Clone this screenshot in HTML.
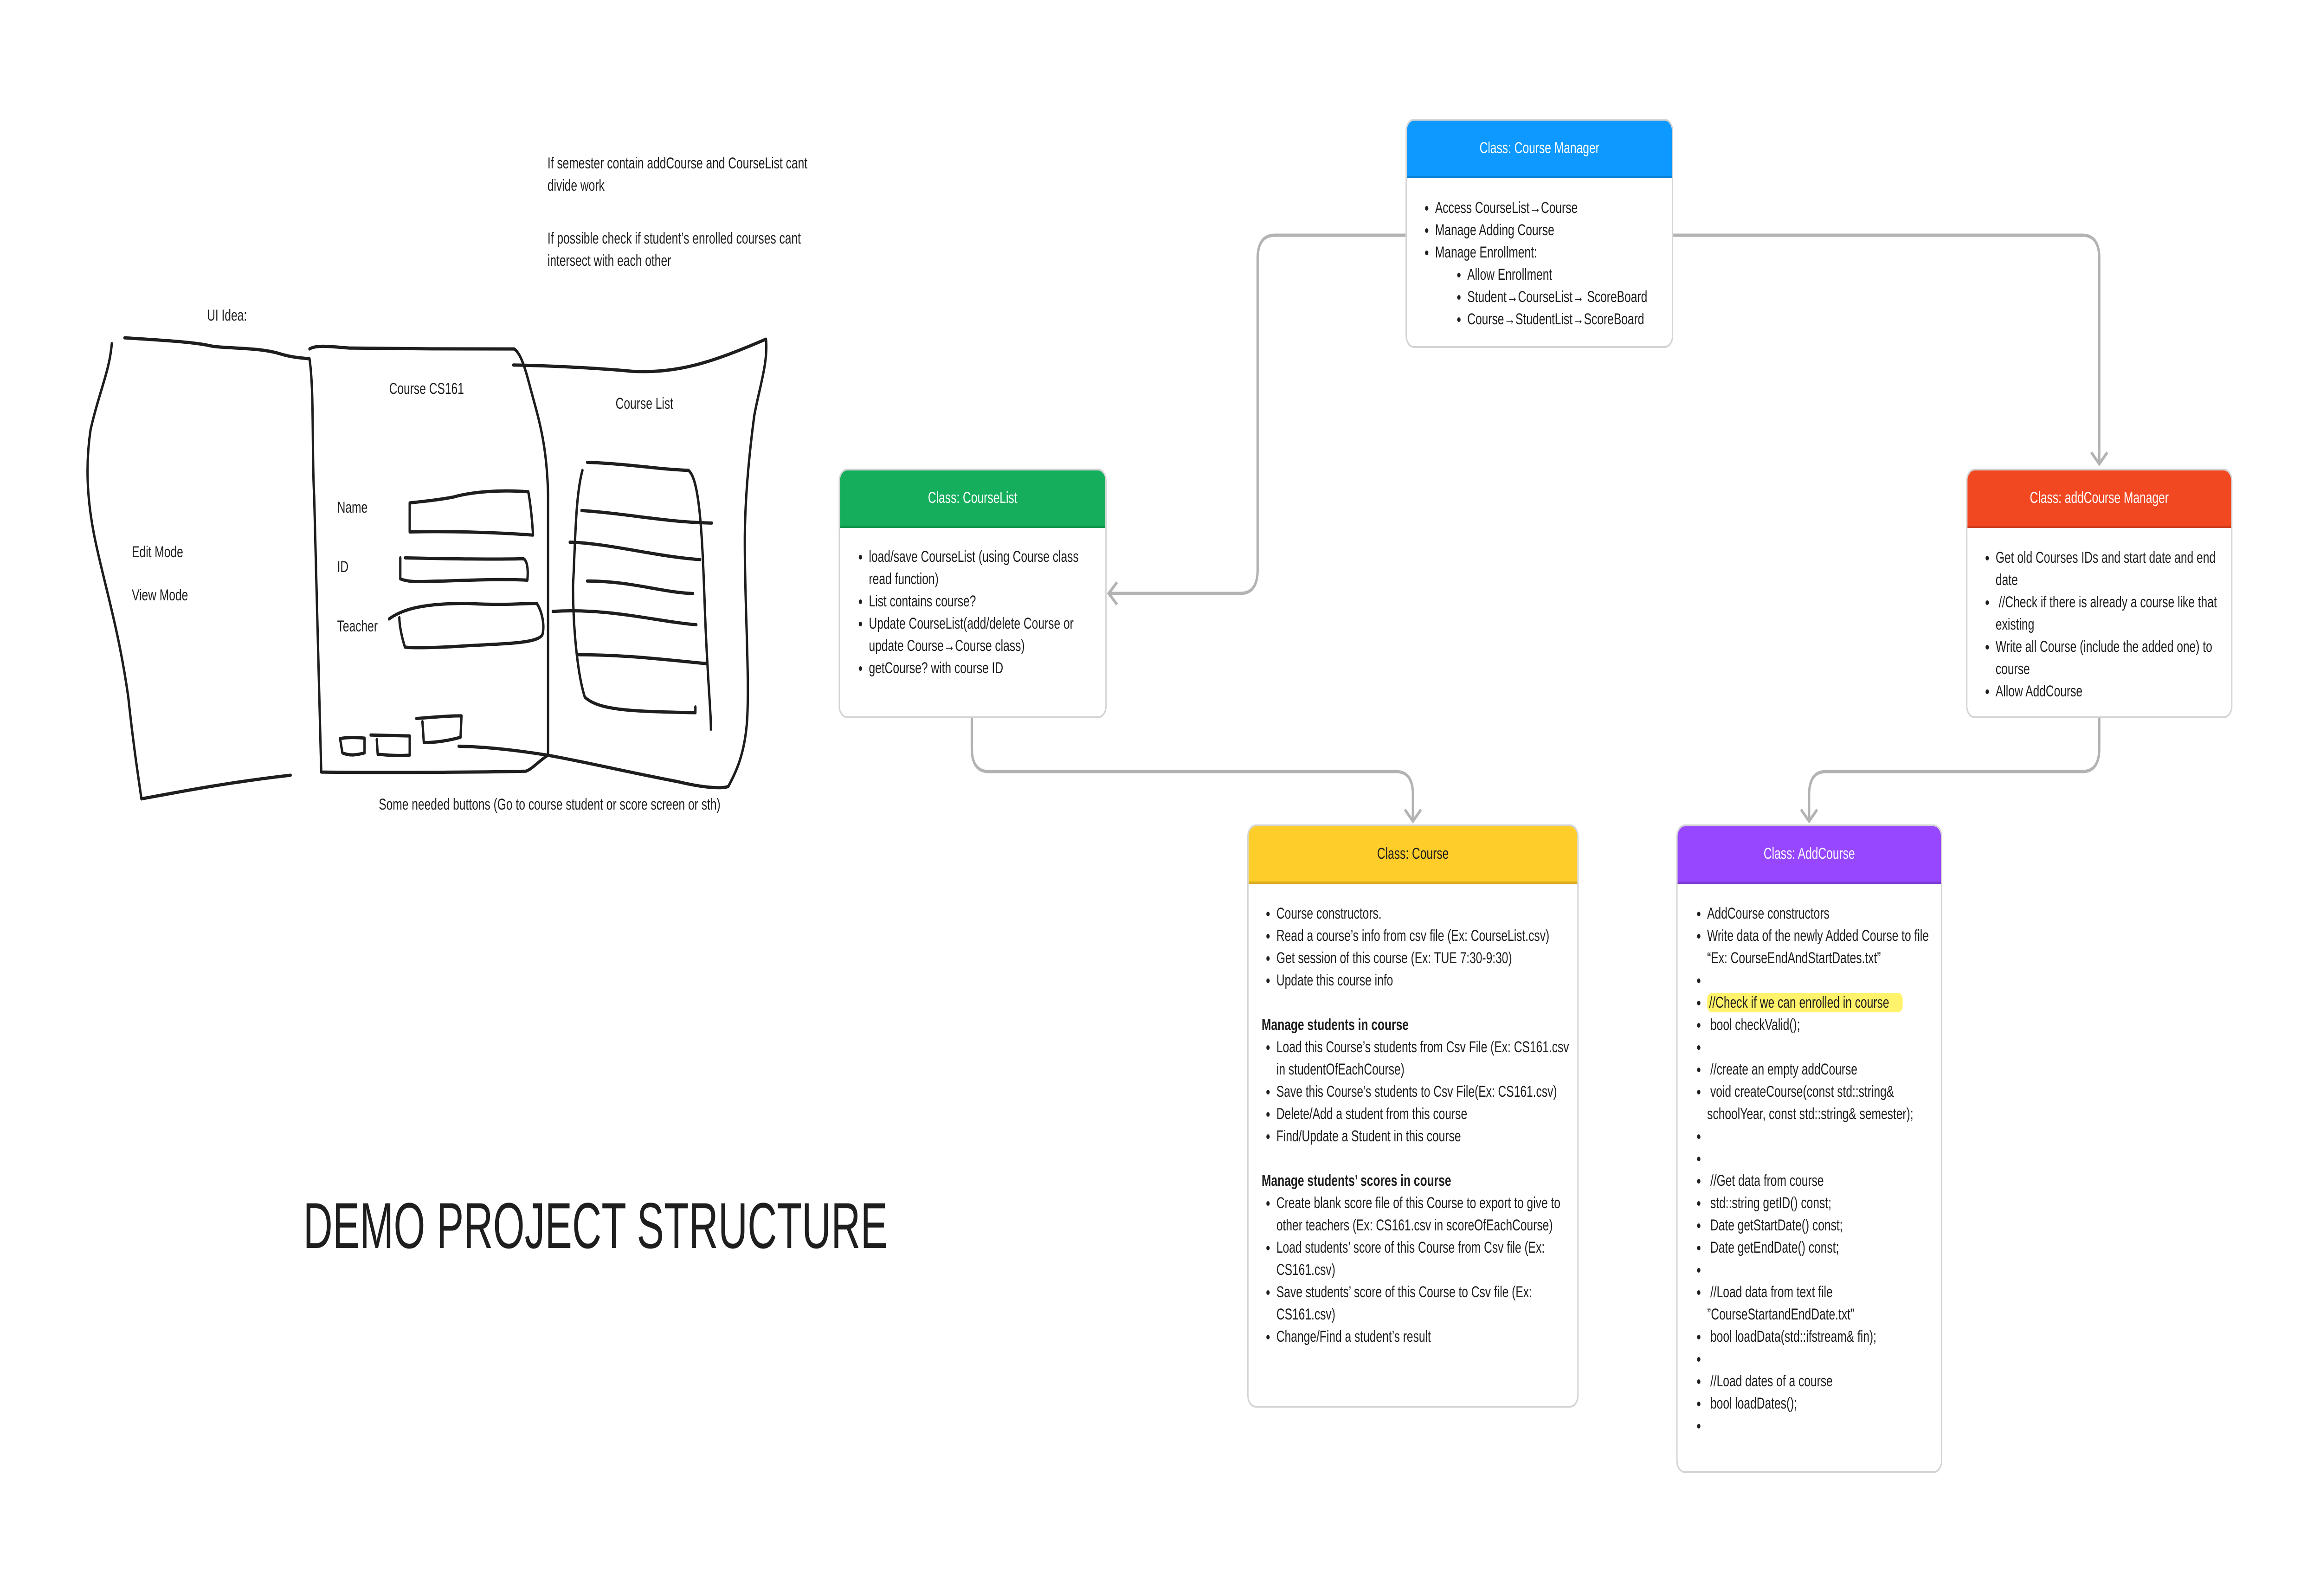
<!DOCTYPE html>
<html><head><meta charset="utf-8"><style>
html,body{margin:0;padding:0;background:#fff;width:100%;height:100%;overflow:hidden}
#root{display:block;width:100vw;height:100vh}
.pg{width:6916px;height:3440px;position:relative;overflow:hidden;font-family:"Liberation Sans",sans-serif;color:#1e1e1e;background:#fff}
.t{position:absolute;font-size:34px;line-height:48px;white-space:nowrap}
.box{position:absolute;background:#fff;border:4px solid #d4d4d4;border-radius:26px;box-sizing:border-box;overflow:hidden}
.hd{height:124px;display:flex;align-items:center;justify-content:center;color:#fff;font-size:34px;border-bottom:5px solid rgba(0,0,0,.15);box-sizing:border-box}
ul{margin:0;padding:0;list-style:none;font-size:34px;line-height:48px}
li{position:relative;white-space:nowrap}
li:before{content:"";position:absolute;width:10px;height:10px;border-radius:50%;background:#1e1e1e;left:-30px;top:20px}
.b{font-weight:bold;font-size:34px;line-height:48px;white-space:nowrap}
</style></head><body>
<svg id="root" viewBox="0 0 6916 3440" preserveAspectRatio="none">
<foreignObject x="0" y="0" width="6916" height="3440">
<div class="pg">

<svg width="6916" height="3440" style="position:absolute;left:0;top:0">
<g fill="none" stroke="#b3b3b3" stroke-width="7">
<path d="M4190,507 H3800 Q3749,507 3749,558 V1228 Q3749,1279 3698,1279 H3310"/>
<path d="M3330,1255 L3305,1279 L3330,1303"/>
<path d="M4988,507 H6208 Q6258,507 6258,557 V995"/>
<path d="M6234,975 L6258,1000 L6282,975"/>
<path d="M2897,1548 V1613 Q2897,1663 2947,1663 H4162 Q4212,1663 4212,1713 V1765"/>
<path d="M4188,1745 L4212,1770 L4236,1745"/>
<path d="M6258,1548 V1613 Q6258,1663 6208,1663 H5443 Q5393,1663 5393,1713 V1765"/>
<path d="M5369,1745 L5393,1770 L5417,1745"/>
</g>
<g transform="translate(200,300) scale(1.403,0.962)" fill="none" stroke="#1e1e1e" stroke-width="7" stroke-linecap="round" stroke-linejoin="round">
<path vector-effect="non-scaling-stroke" d="M122,445 C200,450 270,455 300,462 C330,470 400,465 450,480 C480,490 500,490 515,492"/>
<path vector-effect="non-scaling-stroke" d="M95,458 C90,520 70,560 50,650 C40,720 40,800 60,900 C80,1000 110,1100 130,1250 C140,1350 150,1420 158,1478"/>
<path vector-effect="non-scaling-stroke" d="M158,1478 C250,1460 350,1440 475,1425"/>
<path vector-effect="non-scaling-stroke" d="M515,492 C525,560 520,700 525,800 C530,1000 535,1200 540,1418 C700,1420 900,1418 975,1416 C990,1410 1000,1395 1022,1380"/>
<path vector-effect="non-scaling-stroke" d="M515,470 C530,460 560,465 600,468 C700,470 850,470 950,470 C965,480 975,520 985,560 C1000,620 1020,680 1022,800 L1022,1380"/>
<path vector-effect="non-scaling-stroke" d="M948,506 C1050,508 1150,515 1200,520 C1300,525 1370,500 1485,448 C1490,500 1470,560 1460,620 C1450,700 1440,800 1440,900 C1440,1050 1450,1200 1445,1300 C1440,1380 1420,1420 1405,1450"/>
<path vector-effect="non-scaling-stroke" d="M832,1360 C900,1362 960,1370 1020,1380 C1100,1395 1200,1420 1300,1440 C1360,1455 1395,1455 1405,1450"/>
<path vector-effect="non-scaling-stroke" d="M1105,724 C1200,728 1260,740 1320,742 C1345,760 1350,900 1355,1050 C1360,1200 1368,1280 1368,1322"/>
<path vector-effect="non-scaling-stroke" d="M1095,742 C1080,800 1080,900 1075,1000 C1075,1100 1085,1200 1100,1250 C1130,1280 1200,1282 1335,1285 L1335,1272"/>
<path vector-effect="non-scaling-stroke" d="M1093,832 C1200,840 1270,858 1370,860"/>
<path vector-effect="non-scaling-stroke" d="M1068,903 C1150,905 1250,935 1345,942"/>
<path vector-effect="non-scaling-stroke" d="M1105,990 C1200,990 1260,1015 1330,1018"/>
<path vector-effect="non-scaling-stroke" d="M1032,1058 C1150,1050 1250,1080 1337,1088"/>
<path vector-effect="non-scaling-stroke" d="M1083,1155 C1200,1155 1300,1170 1360,1175"/>
<path vector-effect="non-scaling-stroke" d="M728,815 L728,880 C800,878 900,880 990,887 C988,850 985,820 980,790 C920,785 860,790 820,802 C780,810 750,812 728,815"/>
<path vector-effect="non-scaling-stroke" d="M708,938 L708,985 C730,995 760,990 800,990 C860,988 920,985 978,988 C980,965 978,945 970,940 C900,942 800,940 718,938"/>
<path vector-effect="non-scaling-stroke" d="M684,1075 C710,1055 750,1040 850,1040 C930,1045 970,1040 998,1040 C1010,1060 1015,1090 1010,1110 C1000,1130 930,1130 850,1135 C780,1140 730,1140 718,1138 C712,1120 706,1090 706,1072"/>
<path vector-effect="non-scaling-stroke" d="M580,1343 L585,1375 C600,1382 615,1380 632,1375 L632,1342 C615,1340 595,1340 580,1343"/>
<path vector-effect="non-scaling-stroke" d="M645,1335 L728,1337 L728,1380 C700,1382 680,1380 660,1378 L658,1345"/>
<path vector-effect="non-scaling-stroke" d="M742,1298 C780,1295 810,1292 838,1292 L836,1340 C810,1348 780,1352 758,1352 L755,1305"/>
</g>
<text x="904" y="2690" font-family="Liberation Sans, sans-serif" font-size="140" fill="#1e1e1e" textLength="1742" lengthAdjust="spacingAndGlyphs">DEMO PROJECT STRUCTURE</text>
</svg>

<div class="t" style="left:1632px;top:328px">If semester contain addCourse and CourseList cant<br>divide work</div>
<div class="t" style="left:1632px;top:490px">If possible check if student’s enrolled courses cant<br>intersect with each other</div>
<div class="t" style="left:617px;top:656px">UI Idea:</div>
<div class="t" style="left:1160px;top:814px">Course CS161</div>
<div class="t" style="left:1835px;top:846px">Course List</div>
<div class="t" style="left:1005px;top:1070px">Name</div>
<div class="t" style="left:1005px;top:1198px">ID</div>
<div class="t" style="left:1005px;top:1326px">Teacher</div>
<div class="t" style="left:393px;top:1166px">Edit Mode</div>
<div class="t" style="left:393px;top:1259px">View Mode</div>
<div class="t" style="left:1129px;top:1710px">Some needed buttons (Go to course student or score screen or sth)</div>

<div class="box" style="left:4190px;top:256px;width:798px;height:494px">
<div class="hd" style="background:#0D99FF">Class: Course Manager</div>
<ul style="margin:40px 0 0 84px">
<li>Access CourseList→Course</li>
<li>Manage Adding Course</li>
<li>Manage Enrollment:</li>
<li style="margin-left:96px">Allow Enrollment</li>
<li style="margin-left:96px">Student→CourseList→ ScoreBoard</li>
<li style="margin-left:96px">Course→StudentList→ScoreBoard</li>
</ul></div>

<div class="box" style="left:2500px;top:1010px;width:799px;height:538px">
<div class="hd" style="background:#14AE5C">Class: CourseList</div>
<ul style="margin:38px 0 0 86px">
<li>load/save CourseList (using Course class<br>read function)</li>
<li>List contains course?</li>
<li>Update CourseList(add/delete Course or<br>update Course→Course class)</li>
<li>getCourse? with course ID</li>
</ul></div>

<div class="box" style="left:5861px;top:1010px;width:794px;height:538px">
<div class="hd" style="background:#F24822">Class: addCourse Manager</div>
<ul style="margin:40px 0 0 84px">
<li>Get old Courses IDs and start date and end<br>date</li>
<li>&nbsp;//Check if there is already a course like that<br>existing</li>
<li>Write all Course (include the added one) to<br>course</li>
<li>Allow AddCourse</li>
</ul></div>

<div class="box" style="left:3718px;top:1777px;width:988px;height:1257px">
<div class="hd" style="background:#FFCD29;color:#1e1e1e">Class: Course</div>
<div style="margin:40px 0 0 39px">
<ul style="margin-left:44px">
<li>Course constructors.</li>
<li>Read a course’s info from csv file (Ex: CourseList.csv)</li>
<li>Get session of this course (Ex: TUE 7:30-9:30)</li>
<li>Update this course info</li>
</ul>
<div class="b" style="margin-top:48px">Manage students in course</div>
<ul style="margin-left:44px">
<li>Load this Course’s students from Csv File (Ex: CS161.csv<br>in studentOfEachCourse)</li>
<li>Save this Course’s students to Csv File(Ex: CS161.csv)</li>
<li>Delete/Add a student from this course</li>
<li>Find/Update a Student in this course</li>
</ul>
<div class="b" style="margin-top:48px">Manage students’ scores in course</div>
<ul style="margin-left:44px">
<li>Create blank score file of this Course to export to give to<br>other teachers (Ex: CS161.csv in scoreOfEachCourse)</li>
<li>Load students’ score of this Course from Csv file (Ex:<br>CS161.csv)</li>
<li>Save students’ score of this Course to Csv file (Ex:<br>CS161.csv)</li>
<li>Change/Find a student’s result</li>
</ul></div></div>

<div class="box" style="left:4997px;top:1777px;width:793px;height:1398px">
<div class="hd" style="background:#9747FF">Class: AddCourse</div>
<ul style="margin:40px 0 0 88px">
<li>AddCourse constructors</li>
<li>Write data of the newly Added Course to file<br>“Ex: CourseEndAndStartDates.txt”</li>
<li>&nbsp;</li>
<li><span style="background:#FFF36B;padding:2px 40px 2px 6px;border-radius:14px">//Check if we can enrolled in course</span></li>
<li>&nbsp;bool checkValid();</li>
<li>&nbsp;</li>
<li>&nbsp;//create an empty addCourse</li>
<li>&nbsp;void createCourse(const std::string&amp;<br>schoolYear, const std::string&amp; semester);</li>
<li>&nbsp;</li>
<li>&nbsp;</li>
<li>&nbsp;//Get data from course</li>
<li>&nbsp;std::string getID() const;</li>
<li>&nbsp;Date getStartDate() const;</li>
<li>&nbsp;Date getEndDate() const;</li>
<li>&nbsp;</li>
<li>&nbsp;//Load data from text file<br>”CourseStartandEndDate.txt”</li>
<li>&nbsp;bool loadData(std::ifstream&amp; fin);</li>
<li>&nbsp;</li>
<li>&nbsp;//Load dates of a course</li>
<li>&nbsp;bool loadDates();</li>
<li>&nbsp;</li>
</ul></div>

</div>
</foreignObject>
</svg>
</body></html>
